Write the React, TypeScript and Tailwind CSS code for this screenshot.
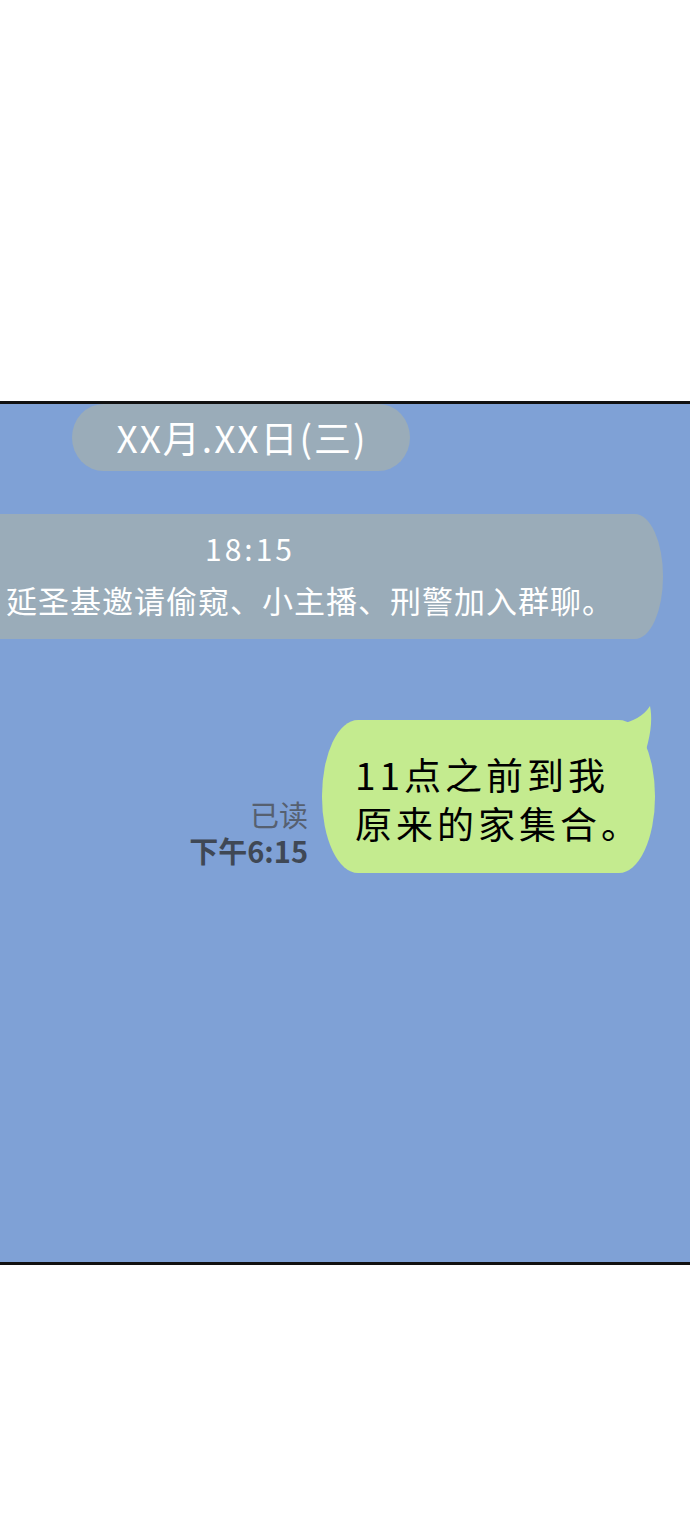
import React from "react";

const cjk = { fontFamily: '"Noto Sans CJK SC", "Noto Sans", sans-serif' };

export default function App() {
  return (
    <div className="w-[690px] h-[1538px] bg-white flex flex-col" style={cjk}>
      <div className="h-[401px] bg-white shrink-0" />
      <div className="h-[3px] bg-[#111111] shrink-0" />
      <div className="h-[858px] bg-[#7fa1d6] shrink-0 relative overflow-hidden flex flex-col">
        <div className="ml-[72px] w-[338px] h-[67px] rounded-[32px/34px] bg-[#9aacb9] flex items-center justify-center text-white text-[37px] leading-none">
          <span className="tracking-[2px] pl-[2px]">XX月.XX日(三)</span>
        </div>
        <div className="mt-[43px] -ml-[40px] w-[703px] h-[125px] rounded-[28px/62px] bg-[#9aacb9] flex flex-col text-white">
          <div className="ml-[245px] mt-[16px] text-[30px] leading-[36px] tracking-[3px]">18:15</div>
          <div className="ml-[46px] mt-[15px] text-[31px] leading-[38px] tracking-[1px] whitespace-nowrap">
            延圣基邀请偷窥、小主播、刑警加入群聊。
          </div>
        </div>
        <div className="mt-[81px] flex items-end justify-end pr-[35px] gap-[14px]">
          <div className="flex flex-col items-end gap-[7px] mb-[8px]">
            <div className="text-[29px] leading-[29px] text-[#566070]">已读</div>
            <div className="text-[29px] leading-[29px] font-bold text-[#3f4855]">下午6:15</div>
          </div>
          <div className="relative w-[333px] h-[153px]">
            <svg className="absolute -top-[14px] right-[-1px]" width="40" height="44" viewBox="0 0 40 44">
              <path d="M4 18 C16 16 28 10 34 0 C36 10 36 24 30 44 L4 44 Z" fill="#c4eb8f" />
            </svg>
            <div className="absolute inset-0 rounded-[36px/76px] bg-[#c4eb8f] flex flex-col pl-[33px] pt-[30px] text-black text-[37px] leading-[49px] tracking-[4px]">
              <div>11点之前到我</div>
              <div>原来的家集合。</div>
            </div>
          </div>
        </div>
      </div>
      <div className="h-[3px] bg-[#111111] shrink-0" />
      <div className="flex-1 bg-white" />
    </div>
  );
}
